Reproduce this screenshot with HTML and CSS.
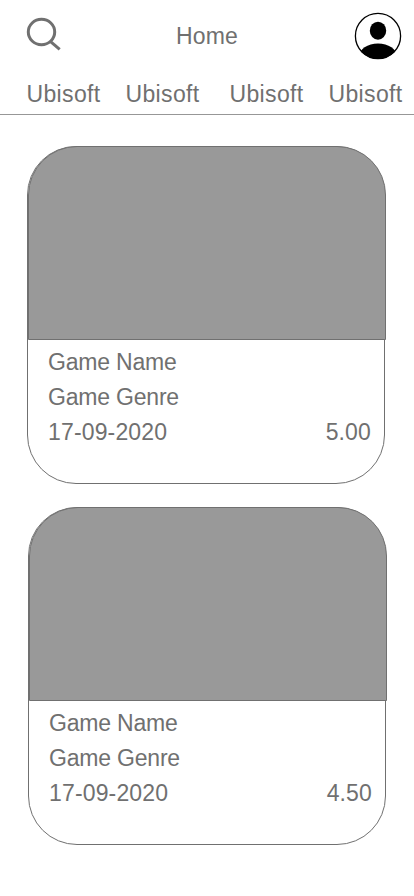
FILE: index.html
```html
<!DOCTYPE html>
<html lang="en">
<head>
<meta charset="utf-8">
<title>Home</title>
<link rel="stylesheet" href="styles.css">
</head>
<body>
<header class="topbar">
  <svg class="search" viewBox="0 0 36 36" width="36" height="36"><ellipse cx="15.5" cy="16" rx="13.2" ry="12.7"/><path d="M24.3 25.3 33.7 33.3"/></svg>
  <h1 class="title">Home</h1>
  <svg class="avatar" viewBox="0 0 48 48" width="48" height="48">
    <defs><clipPath id="face"><circle cx="24" cy="24" r="23"/></clipPath></defs>
    <ellipse cx="24" cy="18.7" rx="8.2" ry="9"/>
    <ellipse cx="24" cy="44.7" rx="19" ry="13.3" clip-path="url(#face)"/>
    <circle class="ring" cx="24" cy="24" r="22.6"/>
  </svg>
</header>
<nav class="tabs"><span>Ubisoft</span><span>Ubisoft</span><span>Ubisoft</span><span>Ubisoft</span></nav>
<main class="list">
  <article class="card">
    <div class="cover"></div>
    <div class="info">
      <div>Game Name</div>
      <div>Game Genre</div>
      <div class="row"><span class="date">17-09-2020</span><span>5.00</span></div>
    </div>
  </article>
  <article class="card shifted">
    <div class="cover"></div>
    <div class="info">
      <div>Game Name</div>
      <div>Game Genre</div>
      <div class="row"><span class="date">17-09-2020</span><span>4.50</span></div>
    </div>
  </article>
</main>
</body>
</html>
```
FILE: styles.css
```css
* { box-sizing: border-box; }
body {
  margin: 0;
  height: 896px;
  overflow: hidden;
  background: #fff;
  color: #707070;
  font: 23px/35px "Liberation Sans", Arial, sans-serif;
  letter-spacing: 0.15px;
}
.topbar {
  display: grid;
  grid-template-columns: 150px 150px 48px;
  height: 76px;
  padding: 12px 0 0 26px;
}
.search {
  margin-top: 4px;
  fill: none;
  stroke: #707070;
  stroke-width: 3;
}
.title {
  margin: 7px 0 0;
  font: inherit;
}
.avatar { margin-left: 27.7px; }
.ring {
  fill: none;
  stroke: #000;
  stroke-width: 1.3;
}
.tabs {
  display: grid;
  grid-template-columns: 99px 104px 99px 85px;
  height: 39px;
  padding: 1px 0 0 26.5px;
  border-bottom: 1px solid #979797;
  letter-spacing: 0.35px;
}
.list {
  display: flex;
  flex-direction: column;
  gap: 23px;
  padding: 31px 0 0 27px;
}
.card {
  width: 358px;
  height: 338px;
  border: 1px solid #707070;
  border-radius: 49px;
}
.shifted { margin-left: 1px; }
.cover {
  width: 358px;
  height: 194px;
  margin-top: -1px;
  background: #999;
  border: 1px solid #707070;
  border-radius: 49px 49px 0 0;
}
.info {
  padding: 5px 13px 0 20px;
  letter-spacing: -0.2px;
}
.row {
  display: flex;
  justify-content: space-between;
  letter-spacing: 0.15px;
}
```
